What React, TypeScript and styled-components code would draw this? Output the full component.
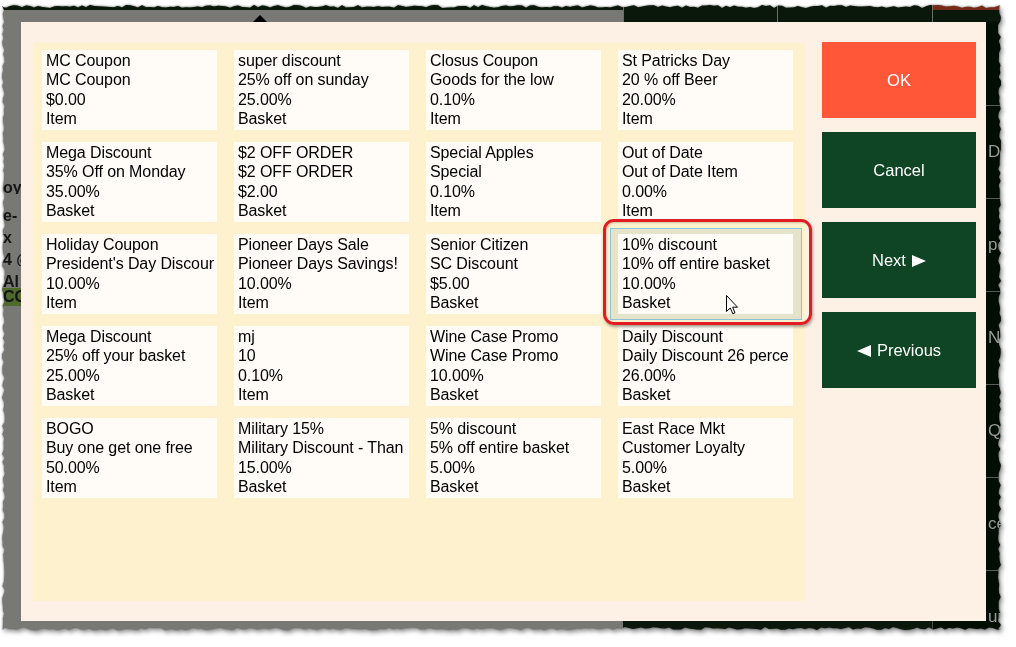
import React from 'react';
import styled, { createGlobalStyle } from 'styled-components';

const GlobalStyle = createGlobalStyle`
  html, body {
    margin: 0;
    padding: 0;
    background: #ffffff;
  }
  body {
    font-family: "Liberation Sans", Arial, sans-serif;
  }
`;

type Discount = { name: string; desc: string; amount: string; scope: string };

const discounts: Discount[] = [
  { name: 'MC Coupon', desc: 'MC Coupon', amount: '$0.00', scope: 'Item' },
  { name: 'super discount', desc: '25% off on sunday', amount: '25.00%', scope: 'Basket' },
  { name: 'Closus Coupon', desc: 'Goods for the low', amount: '0.10%', scope: 'Item' },
  { name: 'St Patricks Day', desc: '20 % off Beer', amount: '20.00%', scope: 'Item' },
  { name: 'Mega Discount', desc: '35% Off on Monday', amount: '35.00%', scope: 'Basket' },
  { name: '$2 OFF ORDER', desc: '$2 OFF ORDER', amount: '$2.00', scope: 'Basket' },
  { name: 'Special Apples', desc: 'Special', amount: '0.10%', scope: 'Item' },
  { name: 'Out of Date', desc: 'Out of Date Item', amount: '0.00%', scope: 'Item' },
  { name: 'Holiday Coupon', desc: "President's Day Discoun", amount: '10.00%', scope: 'Item' },
  { name: 'Pioneer Days Sale', desc: 'Pioneer Days Savings!', amount: '10.00%', scope: 'Item' },
  { name: 'Senior Citizen', desc: 'SC Discount', amount: '$5.00', scope: 'Basket' },
  { name: '10% discount', desc: '10% off entire basket', amount: '10.00%', scope: 'Basket' },
  { name: 'Mega Discount', desc: '25% off your basket', amount: '25.00%', scope: 'Basket' },
  { name: 'mj', desc: '10', amount: '0.10%', scope: 'Item' },
  { name: 'Wine Case Promo', desc: 'Wine Case Promo', amount: '10.00%', scope: 'Basket' },
  { name: 'Daily Discount', desc: 'Daily Discount 26 perce', amount: '26.00%', scope: 'Basket' },
  { name: 'BOGO', desc: 'Buy one get one free', amount: '50.00%', scope: 'Item' },
  { name: 'Military 15%', desc: 'Military Discount - Than', amount: '15.00%', scope: 'Basket' },
  { name: '5% discount', desc: '5% off entire basket', amount: '5.00%', scope: 'Basket' },
  { name: 'East Race Mkt', desc: 'Customer Loyalty', amount: '5.00%', scope: 'Basket' },
];

const SELECTED = 11;

// torn paper edge of the screenshot
const FRAME_W = 999;
const FRAME_H = 625;

function tornEdge(w: number, h: number) {
  let seed = 11;
  const rnd = () => {
    seed = (seed * 9301 + 49297) % 233280;
    return (seed / 233280) * 3;
  };
  const pts: string[] = [];
  for (let x = 0; x < w; x += 4) pts.push(`${x}px ${rnd().toFixed(1)}px`);
  for (let y = 0; y < h; y += 4) pts.push(`${(w - rnd()).toFixed(1)}px ${y}px`);
  for (let x = w; x > 0; x -= 4) pts.push(`${x}px ${(h - rnd()).toFixed(1)}px`);
  for (let y = h; y > 0; y -= 4) pts.push(`${rnd().toFixed(1)}px ${y}px`);
  return `polygon(${pts.join(',')})`;
}

const clip = tornEdge(FRAME_W, FRAME_H);

const Page = styled.div`
  width: 1016px;
  height: 647px;
  padding: 5px 0 0 2px;
  box-sizing: border-box;
  overflow: hidden;
`;

const Shadow = styled.div`
  width: ${FRAME_W}px;
  filter: drop-shadow(0 0 0.8px rgba(0, 0, 0, 0.55)) drop-shadow(2px 3px 2px rgba(0, 0, 0, 0.4));
`;

const Frame = styled.div<{ $clip: string }>`
  position: relative;
  width: ${FRAME_W}px;
  height: ${FRAME_H}px;
  clip-path: ${(p) => p.$clip};
  display: grid;
  grid-template-columns: 621px 1fr;
  overflow: hidden;
`;

/* ---------- dimmed app behind the dialog ---------- */

const LeftPane = styled.div`
  background: #787874;
  display: flex;
  flex-direction: column;
`;

const TopDark = styled.div`
  height: 5px;
  background: #0b180c;
`;

const CaretRow = styled.div`
  height: 12px;
  display: flex;
  align-items: flex-end;
  padding-left: 251px;
`;

const Caret = styled.div`
  width: 0;
  height: 0;
  border-left: 7px solid transparent;
  border-right: 7px solid transparent;
  border-bottom: 7px solid #000;
`;

const SideList = styled.div`
  margin-top: 152px;
  display: flex;
  flex-direction: column;
`;

const SideText = styled.div<{ $gap: number; $green?: boolean }>`
  margin-top: ${(p) => p.$gap}px;
  height: ${(p) => (p.$green ? 18 : 15)}px;
  line-height: ${(p) => (p.$green ? 18 : 15)}px;
  width: 19px;
  padding-left: 1px;
  font: bold 16px "Liberation Sans", Arial, sans-serif;
  color: #151515;
  white-space: nowrap;
  overflow: hidden;
  background: ${(p) => (p.$green ? '#4f6a2a' : 'transparent')};
`;

const Spacer = styled.div`
  flex: 1;
`;

const FootText = styled.div`
  font: 13px "Liberation Sans", Arial, sans-serif;
  color: #000;
  margin: 0 0 16px 1px;
`;

const RightPane = styled.div`
  background: #000e03;
  display: grid;
  grid-template-columns: 154px 155px 1fr;
  grid-template-rows: 17px 1fr 9px;
`;

const TopCell = styled.div<{ $accent?: boolean }>`
  background: #0a170b;
  border-left: 1px solid #6c6c6c;
  box-shadow: ${(p) => (p.$accent ? 'inset 0 5px 0 #7a2a19' : 'none')};
`;

const Hidden = styled.div`
  grid-column: 1 / 3;
  background: #0a170b;
`;

const NavColumn = styled.div`
  grid-column: 3;
  grid-row: 2 / 4;
  display: flex;
  flex-direction: column;
  border-left: 1px solid #444;
`;

const NavHead = styled.div`
  height: 83px;
`;

const NavRow = styled.div`
  height: 92px;
  flex-shrink: 0;
  border-top: 1px solid #5a5a5a;
  display: flex;
  align-items: center;
  padding-left: 55px;
  font: 17px "Liberation Sans", Arial, sans-serif;
  color: #9b9b9b;
  white-space: nowrap;
`;

const BottomCell = styled.div`
  background: #766c61;
  border-left: 1px solid #8a8278;
  display: flex;
  align-items: flex-start;
  padding-left: 32px;
`;

/* ---------- dialog ---------- */

const Dialog = styled.div`
  position: absolute;
  left: 19px;
  top: 17px;
  width: 965px;
  height: 599px;
  box-sizing: border-box;
  background: #fdf1e6;
  display: flex;
  padding: 20px 10px 20px 12px;
  gap: 17px;
`;

const Panel = styled.div`
  position: relative;
  z-index: 0;
  width: 772px;
  margin-top: 1px;
  background: #fef1cd;
  display: grid;
  grid-template-columns: repeat(4, 175px);
  grid-auto-rows: 80px;
  column-gap: 17px;
  row-gap: 12px;
  padding: 7px 0 0 9px;
  box-sizing: border-box;
  align-content: start;
`;

const Card = styled.div<{ $selected?: boolean }>`
  position: relative;
  background: #fffbf6;
  padding: 1px 3px 0 4px;
  font-size: 16px;
  line-height: 19.3px;
  color: #000;

  &::before {
    content: '';
    display: ${(p) => (p.$selected ? 'block' : 'none')};
    position: absolute;
    inset: -6px -9px -6px -8px;
    background: #e6e3cb;
    border: 1px solid #8cc4db;
    z-index: -1;
  }
`;

const Line = styled.div`
  white-space: nowrap;
  overflow: hidden;
  letter-spacing: -0.1px;
`;

const ButtonColumn = styled.div`
  display: flex;
  flex-direction: column;
  gap: 14px;
`;

const ActionButton = styled.button<{ $tone: 'ok' | 'dark' }>`
  width: 154px;
  height: 76px;
  border: none;
  margin: 0;
  padding: 0;
  background: ${(p) => (p.$tone === 'ok' ? '#ff5737' : '#0f4424')};
  color: #ffffff;
  font: 16.5px "Liberation Sans", Arial, sans-serif;
  display: flex;
  align-items: center;
  justify-content: center;
  gap: 6px;
`;

const Triangle = styled.span<{ $dir: 'left' | 'right' }>`
  width: 0;
  height: 0;
  margin-top: 1px;
  border-top: 6px solid transparent;
  border-bottom: 6px solid transparent;
  border-left: ${(p) => (p.$dir === 'right' ? '14px solid #fff' : 'none')};
  border-right: ${(p) => (p.$dir === 'left' ? '14px solid #fff' : 'none')};
`;

/* ---------- annotation over the picture ---------- */

const Callout = styled.div`
  position: absolute;
  left: 601px;
  top: 214px;
  width: 209px;
  height: 106px;
  box-sizing: border-box;
  border: 3px solid #e11b22;
  border-radius: 11px;
  box-shadow: 1px 2px 3px rgba(0, 0, 0, 0.35), inset 1px 1px 2px rgba(0, 0, 0, 0.2);
`;

const Pointer = styled.svg`
  position: absolute;
  left: 724px;
  top: 290px;
`;

export default function App() {
  const sideLines: { t: string; gap: number; green?: boolean }[] = [
    { t: 'oy', gap: 5 },
    { t: 'e-', gap: 13 },
    { t: 'x', gap: 7 },
    { t: '4 @', gap: 7 },
    { t: 'Al', gap: 7 },
    { t: 'CO', gap: 0, green: true },
  ];
  const navLines = ['Dis', 'pe', 'No', 'Q', 'ce', 'ur'];

  return (
    <Page>
      <GlobalStyle />
      <Shadow>
        <Frame $clip={clip}>
          <LeftPane>
            <TopDark />
            <CaretRow>
              <Caret />
            </CaretRow>
            <SideList>
              {sideLines.map((l) => (
                <SideText key={l.t} $gap={l.gap} $green={l.green}>
                  {l.t}
                </SideText>
              ))}
            </SideList>
            <Spacer />
            <FootText>300</FootText>
          </LeftPane>

          <RightPane>
            <TopCell />
            <TopCell />
            <TopCell $accent />
            <Hidden />
            <NavColumn>
              <NavHead />
              {navLines.map((t) => (
                <NavRow key={t}>{t}</NavRow>
              ))}
            </NavColumn>
            <BottomCell />
            <BottomCell>
              <svg width="40" height="9" viewBox="0 0 40 9">
                <path d="M0 0 L8 9 L20 9 L20 4 L38 4 L38 0 Z" fill="#000" />
              </svg>
            </BottomCell>
          </RightPane>

          <Dialog>
            <Panel>
              {discounts.map((d, i) => (
                <Card key={i} $selected={i === SELECTED}>
                  <Line>{d.name}</Line>
                  <Line>{d.desc}</Line>
                  <Line>{d.amount}</Line>
                  <Line>{d.scope}</Line>
                </Card>
              ))}
            </Panel>
            <ButtonColumn>
              <ActionButton $tone="ok">OK</ActionButton>
              <ActionButton $tone="dark">Cancel</ActionButton>
              <ActionButton $tone="dark">
                Next
                <Triangle $dir="right" />
              </ActionButton>
              <ActionButton $tone="dark">
                <Triangle $dir="left" />
                Previous
              </ActionButton>
            </ButtonColumn>
          </Dialog>

          <Callout />
          <Pointer width="13" height="20" viewBox="0 0 13 20">
            <path
              d="M0.5 0.5 L0.5 16.5 L4.3 13 L6.8 18.8 L9 17.8 L6.6 12.2 L11.5 12.2 Z"
              fill="#fff"
              stroke="#000"
              strokeWidth="1"
              strokeLinejoin="miter"
            />
          </Pointer>
        </Frame>
      </Shadow>
    </Page>
  );
}
